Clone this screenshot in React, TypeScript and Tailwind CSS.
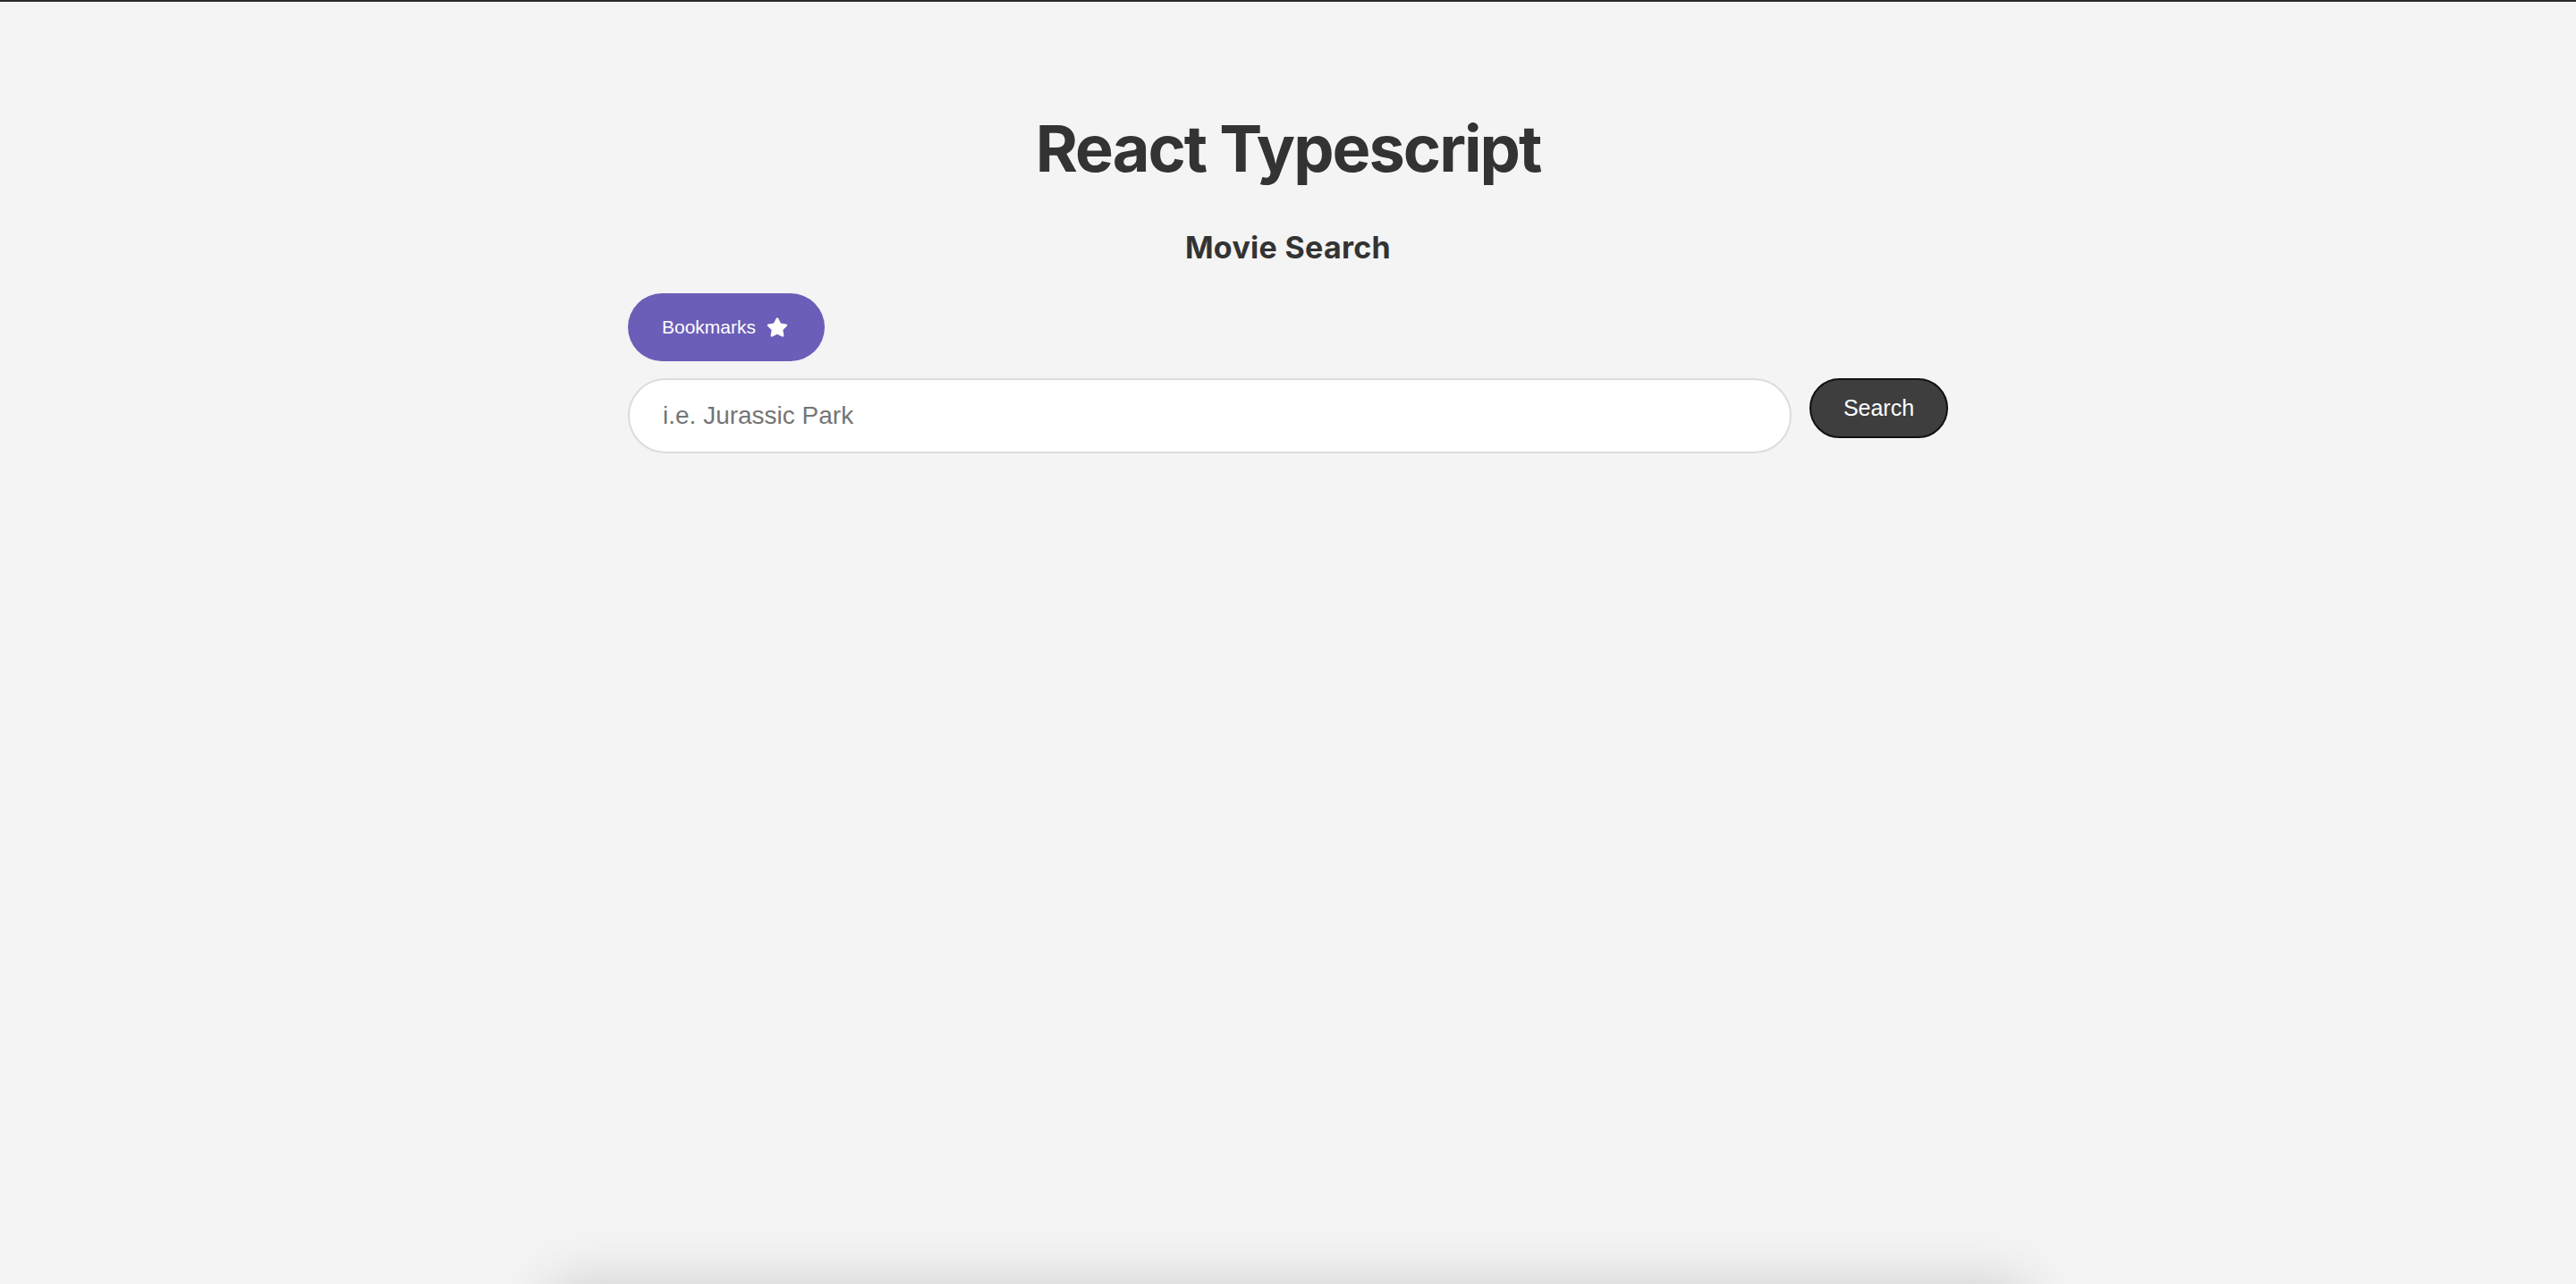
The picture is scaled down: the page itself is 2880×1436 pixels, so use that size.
import React, { useState } from 'react';
import { FaStar } from 'react-icons/fa';

export default function App() {
  const [query, setQuery] = useState('');

  return (
    <div className="h-[1436px] overflow-hidden bg-[#f4f4f4] border-t-2 border-[#2a2a2a] flex flex-col items-center text-[#333]">
      <div className="w-[1476px] flex flex-col shrink-0">
        <h1 className="mt-[128px] text-center text-[72px] leading-none font-bold tracking-[-2px] font-['Inter',sans-serif]">
          React Typescript
        </h1>
        <h2 className="mt-[58px] text-center text-[34px] leading-none font-bold tracking-[0.3px] font-['Inter',sans-serif]">
          Movie Search
        </h2>

        <div className="mt-[34px] flex">
          <button className="h-[76px] w-[220px] pl-[38px] flex items-center gap-[12px] rounded-full bg-[#6b5eb8] text-white text-[21px] font-['Liberation_Sans',Arial,sans-serif]">
            Bookmarks
            <FaStar size={24} />
          </button>
        </div>

        <form
          className="mt-[19px] flex items-start gap-[20px]"
          onSubmit={(e) => e.preventDefault()}
        >
          <input
            value={query}
            onChange={(e) => setQuery(e.target.value)}
            placeholder="i.e. Jurassic Park"
            className="flex-1 h-[84px] rounded-[42px] border-2 border-[#dcdcdc] bg-white px-[37px] text-[28px] text-[#333] placeholder:text-[#757575] outline-none font-['Liberation_Sans',Arial,sans-serif]"
          />
          <button
            type="submit"
            className="h-[67px] w-[155px] rounded-full border-2 border-[#111] bg-[#3e3e3e] text-white text-[25px] font-['Liberation_Sans',Arial,sans-serif]"
          >
            Search
          </button>
        </form>
      </div>

      <div className="flex-1" />
      <div className="shrink-0 w-[1650px] h-[300px] -mb-[300px] bg-[#f4f4f4] shadow-[0_0_60px_rgba(0,0,0,0.16)]" />
    </div>
  );
}
